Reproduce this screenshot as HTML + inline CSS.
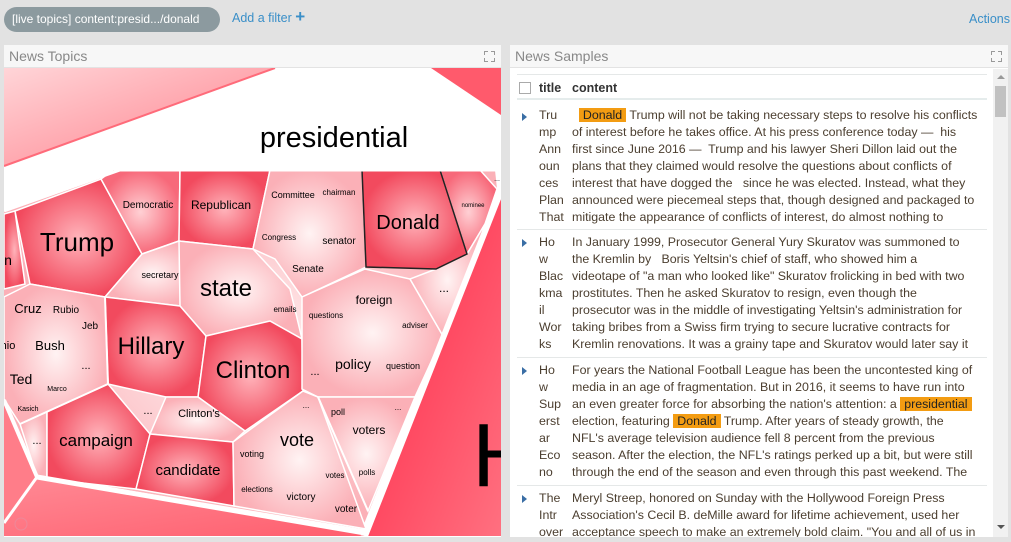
<!DOCTYPE html>
<html><head><meta charset="utf-8"><style>
*{margin:0;padding:0;box-sizing:border-box}
body{width:1011px;height:542px;overflow:hidden;background:#e2e2e2;font-family:"Liberation Sans",sans-serif;position:relative}
.chip{position:absolute;left:4px;top:7px;width:216px;height:25px;border-radius:13px;background:#8c9a9f;color:#fff;font-size:12px;line-height:25px;padding-left:8px;white-space:nowrap}
.add{position:absolute;left:232px;top:11px;color:#3a8fc8;font-size:12.5px}
.act{position:absolute;left:969px;top:12px;color:#3a8fc8;font-size:12.5px}
.panel{position:absolute;top:45px;height:492px;background:#fff}
.ph{height:23px;background:#f7f7f7;border-bottom:1px solid #e3e3e3;color:#888;font-size:14px;line-height:22px;padding-left:5px;position:relative}
.fs{position:absolute;right:6px;top:6px;width:11px;height:11px}
.fs i{position:absolute;width:4px;height:4px;border-color:#999;border-style:solid;border-width:0}
.tb{position:absolute;left:7px;width:470px;font-size:12.4px;color:#4b3e2f;line-height:17px}
.row{position:absolute;left:0;width:470px;border-top:1px solid #e5e8e8}
.t{position:absolute;left:22px;width:30px;white-space:pre}
.c{position:absolute;left:55px;white-space:pre}
.hl{background:#f39c12;padding:0 4px;color:#222}
.tri{position:absolute;left:5px;width:0;height:0;border-left:5px solid #3a6ea5;border-top:4px solid transparent;border-bottom:4px solid transparent}
</style></head><body>
<div class="chip">[live topics] content:presid.../donald</div>
<div class="add">Add a filter <b style="font-size:17px;line-height:10px">+</b></div>
<div class="act">Actions</div>

<div class="panel" style="left:4px;width:497px">
<div class="ph">News Topics<div class="fs"><i style="left:0;top:0;border-left-width:1.5px;border-top-width:1.5px"></i><i style="right:0;top:0;border-right-width:1.5px;border-top-width:1.5px"></i><i style="left:0;bottom:0;border-left-width:1.5px;border-bottom-width:1.5px"></i><i style="right:0;bottom:0;border-right-width:1.5px;border-bottom-width:1.5px"></i></div></div>
<svg width="497" height="468" viewBox="4 69 497 468" style="display:block" font-family="Liberation Sans, sans-serif" text-anchor="middle">
<defs>
<radialGradient id="dk"><stop offset="0" stop-color="#ffb3ba"/><stop offset="1" stop-color="#f24a5e"/></radialGradient>
<radialGradient id="md"><stop offset="0" stop-color="#ffd0d4"/><stop offset="1" stop-color="#f7697a"/></radialGradient>
<radialGradient id="lt"><stop offset="0" stop-color="#fff3f3"/><stop offset="1" stop-color="#fbb0b7"/></radialGradient>
<linearGradient id="tl" x1="0" y1="0" x2="1" y2="1"><stop offset="0" stop-color="#ffd5d8"/><stop offset="1" stop-color="#ff7c88"/></linearGradient>
<linearGradient id="rr" x1="0" y1="0" x2="1" y2="1"><stop offset="0" stop-color="#ff2444"/><stop offset="1" stop-color="#ff7080"/></linearGradient>
<linearGradient id="bt" x1="0" y1="0" x2="1" y2="1"><stop offset="0" stop-color="#ff8a95"/><stop offset="1" stop-color="#ff5e6e"/></linearGradient>
</defs>
<rect x="4" y="69" width="497" height="468" fill="#fff"/>
<polygon points="4,69 275,69 4,167" fill="url(#tl)"/>
<line x1="275" y1="69" x2="4" y2="167" stroke="#ff6b7a" stroke-width="2"/>
<polygon points="431,69 501,69 501,116" fill="#ff5a6c"/>
<polygon points="4,210 4,537 365,537 37,478 4,400" fill="#ff7d89"/>
<polygon points="37,478 365,532 360,537 4,537 4,525" fill="url(#bt)"/>
<polygon points="501,195 501,537 368,537" fill="url(#rr)"/>
<text x="472" y="487" font-size="90" text-anchor="start" fill="#000">H</text>
<polygon points="4,212 120,171 495,171 497,190 362,530 37,476 4,400" fill="url(#lt)"/>
<g stroke="#fff" stroke-width="1.5">
<polygon points="4,215 15,212 25,285 4,290" fill="url(#dk)"/>
<polygon points="15,212 101,180 142,255 105,298 30,285" fill="url(#dk)"/>
<polygon points="101,180 113,171 180,171 179,242 142,255" fill="url(#md)"/>
<polygon points="180,171 270,171 253,250 179,242" fill="url(#dk)"/>
<polygon points="270,171 362,171 366,268 302,298 275,260 253,250" fill="url(#lt)"/>
<polygon points="440,171 480,171 497,190 485,225 467,255" fill="url(#md)"/>
<polygon points="142,255 179,242 200,255 180,307 105,298" fill="url(#lt)"/>
<polygon points="179,242 253,250 290,290 302,340 270,322 206,337 180,307" fill="url(#lt)"/>
<polygon points="105,298 180,307 206,337 198,398 166,398 108,385" fill="url(#dk)"/>
<polygon points="206,337 270,322 302,340 303,392 245,432 198,398" fill="url(#dk)"/>
<polygon points="166,398 198,398 245,432 233,443 150,435" fill="url(#lt)"/>
<polygon points="20,425 47,412 47,480 37,478" fill="url(#lt)"/>
<polygon points="47,412 108,385 150,435 136,490 47,480" fill="url(#dk)"/>
<polygon points="150,435 233,443 234,507 136,490" fill="url(#dk)"/>
<polygon points="4,298 30,285 105,298 108,385 20,425 4,400" fill="url(#lt)"/>
<polygon points="302,298 365,270 410,280 443,337 415,398 318,398 302,390" fill="url(#lt)"/>
<polygon points="233,443 303,392 318,398 366,530 234,507" fill="url(#lt)"/>
<polygon points="318,398 415,398 368,512" fill="url(#lt)"/>
<polygon points="436,270 467,255 485,225 470,275 443,337 410,280" fill="url(#lt)"/>
</g>
<polygon points="362,171 440,171 467,255 436,270 366,268" fill="url(#dk)" stroke="#222" stroke-width="1.5"/>
<g stroke="#fff" fill="none">
<polyline points="4,212 120,171 497,171" stroke-width="3"/>
<line x1="501" y1="192" x2="365" y2="537" stroke-width="6"/>
<polyline points="37,478 365,534" stroke-width="5"/>
<line x1="108" y1="385" x2="20" y2="425" stroke-width="2"/>
<line x1="105" y1="298" x2="108" y2="385" stroke-width="2"/>
<line x1="318" y1="398" x2="368" y2="512" stroke-width="2"/>
</g>
<path d="M4 404 L35 478 L4 521 Z" fill="#ff7d89" stroke="none"/>
<path d="M4 401 L37 478" stroke="#fff" stroke-width="4" fill="none"/>
<path d="M37 478 L4 524" stroke="#fff" stroke-width="3" fill="none"/>
<circle cx="21" cy="525" r="6" fill="none" stroke="#e89" stroke-width="1"/>
<text x="334" y="148" font-size="29">presidential</text>
<text x="77" y="252" font-size="26">Trump</text>
<text x="408" y="230" font-size="20">Donald</text>
<text x="221" y="210" font-size="12">Republican</text>
<text x="148" y="209" font-size="10">Democratic</text>
<text x="293" y="199" font-size="9">Committee</text>
<text x="339" y="196" font-size="8">chairman</text>
<text x="279" y="241" font-size="8">Congress</text>
<text x="339" y="245" font-size="10">senator</text>
<text x="308" y="273" font-size="10">Senate</text>
<text x="473" y="208" font-size="6">nominee</text>
<text x="497" y="182" font-size="7">...</text>
<text x="160" y="279" font-size="9">secretary</text>
<text x="226" y="297" font-size="24">state</text>
<text x="285" y="313" font-size="8">emails</text>
<text x="151" y="355" font-size="24">Hillary</text>
<text x="253" y="379" font-size="24">Clinton</text>
<text x="199" y="418" font-size="11">Clinton's</text>
<text x="96" y="447" font-size="17">campaign</text>
<text x="188" y="476" font-size="15">candidate</text>
<text x="148" y="415" font-size="11">...</text>
<text x="37" y="445" font-size="11">...</text>
<text x="297" y="447" font-size="18">vote</text>
<text x="252" y="458" font-size="9">voting</text>
<text x="257" y="493" font-size="8">elections</text>
<text x="301" y="501" font-size="10">victory</text>
<text x="335" y="479" font-size="8">votes</text>
<text x="346" y="513" font-size="10">voter</text>
<text x="338" y="416" font-size="9">poll</text>
<text x="369" y="435" font-size="12">voters</text>
<text x="367" y="476" font-size="8">polls</text>
<text x="306" y="409" font-size="8">...</text>
<text x="398" y="411" font-size="8">...</text>
<text x="374" y="305" font-size="12">foreign</text>
<text x="326" y="319" font-size="8">questions</text>
<text x="415" y="329" font-size="8">adviser</text>
<text x="353" y="370" font-size="14">policy</text>
<text x="403" y="370" font-size="9">question</text>
<text x="315" y="376" font-size="11">...</text>
<text x="444" y="293" font-size="12">...</text>
<text x="28" y="314" font-size="13">Cruz</text>
<text x="66" y="314" font-size="10">Rubio</text>
<text x="90" y="330" font-size="10">Jeb</text>
<text x="50" y="351" font-size="13">Bush</text>
<text x="86" y="370" font-size="11">...</text>
<text x="21" y="385" font-size="14">Ted</text>
<text x="57" y="392" font-size="7">Marco</text>
<text x="28" y="412" font-size="7">Kasich</text>
<text x="8" y="350" font-size="11">hio</text>
<text x="8" y="266" font-size="14">n</text>
</svg>
</div>

<div class="panel" style="left:510px;width:498px">
<div class="ph">News Samples<div class="fs"><i style="left:0;top:0;border-left-width:1.5px;border-top-width:1.5px"></i><i style="right:0;top:0;border-right-width:1.5px;border-top-width:1.5px"></i><i style="left:0;bottom:0;border-left-width:1.5px;border-bottom-width:1.5px"></i><i style="right:0;bottom:0;border-right-width:1.5px;border-bottom-width:1.5px"></i></div></div>
<div style="position:absolute;left:483px;top:24px;width:15px;height:468px;background:#f1f1f1"></div>
<div style="position:absolute;left:485px;top:41px;width:11px;height:31px;background:#c1c1c1"></div>
<div style="position:absolute;left:487px;top:30px;border-bottom:4px solid #999;border-left:4px solid transparent;border-right:4px solid transparent"></div>
<div style="position:absolute;left:487px;top:480px;border-top:4px solid #555;border-left:4px solid transparent;border-right:4px solid transparent"></div>
<div class="tb" style="top:0;height:492px;overflow:hidden">
<div class="row" style="top:29px;height:26px;border-bottom:2px solid #e5ecec;font-weight:bold;color:#333;font-size:12.5px">
<div style="position:absolute;left:2px;top:7px;width:12px;height:12px;border:1px solid #aaa"></div>
<div class="t" style="top:5px">title</div><div class="c" style="top:5px">content</div></div>
<div class="row" style="top:57px;height:128px;border-top:none">
<div class="tri" style="top:11px"></div>
<div class="t" style="top:5px">Tru
mp
Ann
oun
ces
Plan
That</div>
<div class="c" style="top:5px">  <span class="hl">Donald</span> Trump will not be taking necessary steps to resolve his conflicts
of interest before he takes office. At his press conference today —  his
first since June 2016 —  Trump and his lawyer Sheri Dillon laid out the
plans that they claimed would resolve the questions about conflicts of
interest that have dogged the   since he was elected. Instead, what they
announced were piecemeal steps that, though designed and packaged to
mitigate the appearance of conflicts of interest, do almost nothing to</div></div>
<div class="row" style="top:184px;height:128px">
<div class="tri" style="top:9px"></div>
<div class="t" style="top:4px">Ho
w
Blac
kma
il
Wor
ks</div>
<div class="c" style="top:4px">In January 1999, Prosecutor General Yury Skuratov was summoned to
the Kremlin by   Boris Yeltsin's chief of staff, who showed him a
videotape of "a man who looked like" Skuratov frolicking in bed with two
prostitutes. Then he asked Skuratov to resign, even though the
prosecutor was in the middle of investigating Yeltsin's administration for
taking bribes from a Swiss firm trying to secure lucrative contracts for
Kremlin renovations. It was a grainy tape and Skuratov would later say it</div></div>
<div class="row" style="top:312px;height:128px">
<div class="tri" style="top:9px"></div>
<div class="t" style="top:4px">Ho
w
Sup
erst
ar
Eco
no</div>
<div class="c" style="top:4px">For years the National Football League has been the uncontested king of
media in an age of fragmentation. But in 2016, it seems to have run into
an even greater force for absorbing the nation's attention: a <span class="hl">presidential</span>
election, featuring <span class="hl">Donald</span> Trump. After years of steady growth, the
NFL's average television audience fell 8 percent from the previous
season. After the election, the NFL's ratings perked up a bit, but were still
through the end of the season and even through this past weekend. The</div></div>
<div class="row" style="top:440px;height:60px">
<div class="tri" style="top:9px"></div>
<div class="t" style="top:4px">The
Intr
over</div>
<div class="c" style="top:4px">Meryl Streep, honored on Sunday with the Hollywood Foreign Press
Association's Cecil B. deMille award for lifetime achievement, used her
acceptance speech to make an extremely bold claim. "You and all of us in</div></div>
</div>
</div>
</body></html>
